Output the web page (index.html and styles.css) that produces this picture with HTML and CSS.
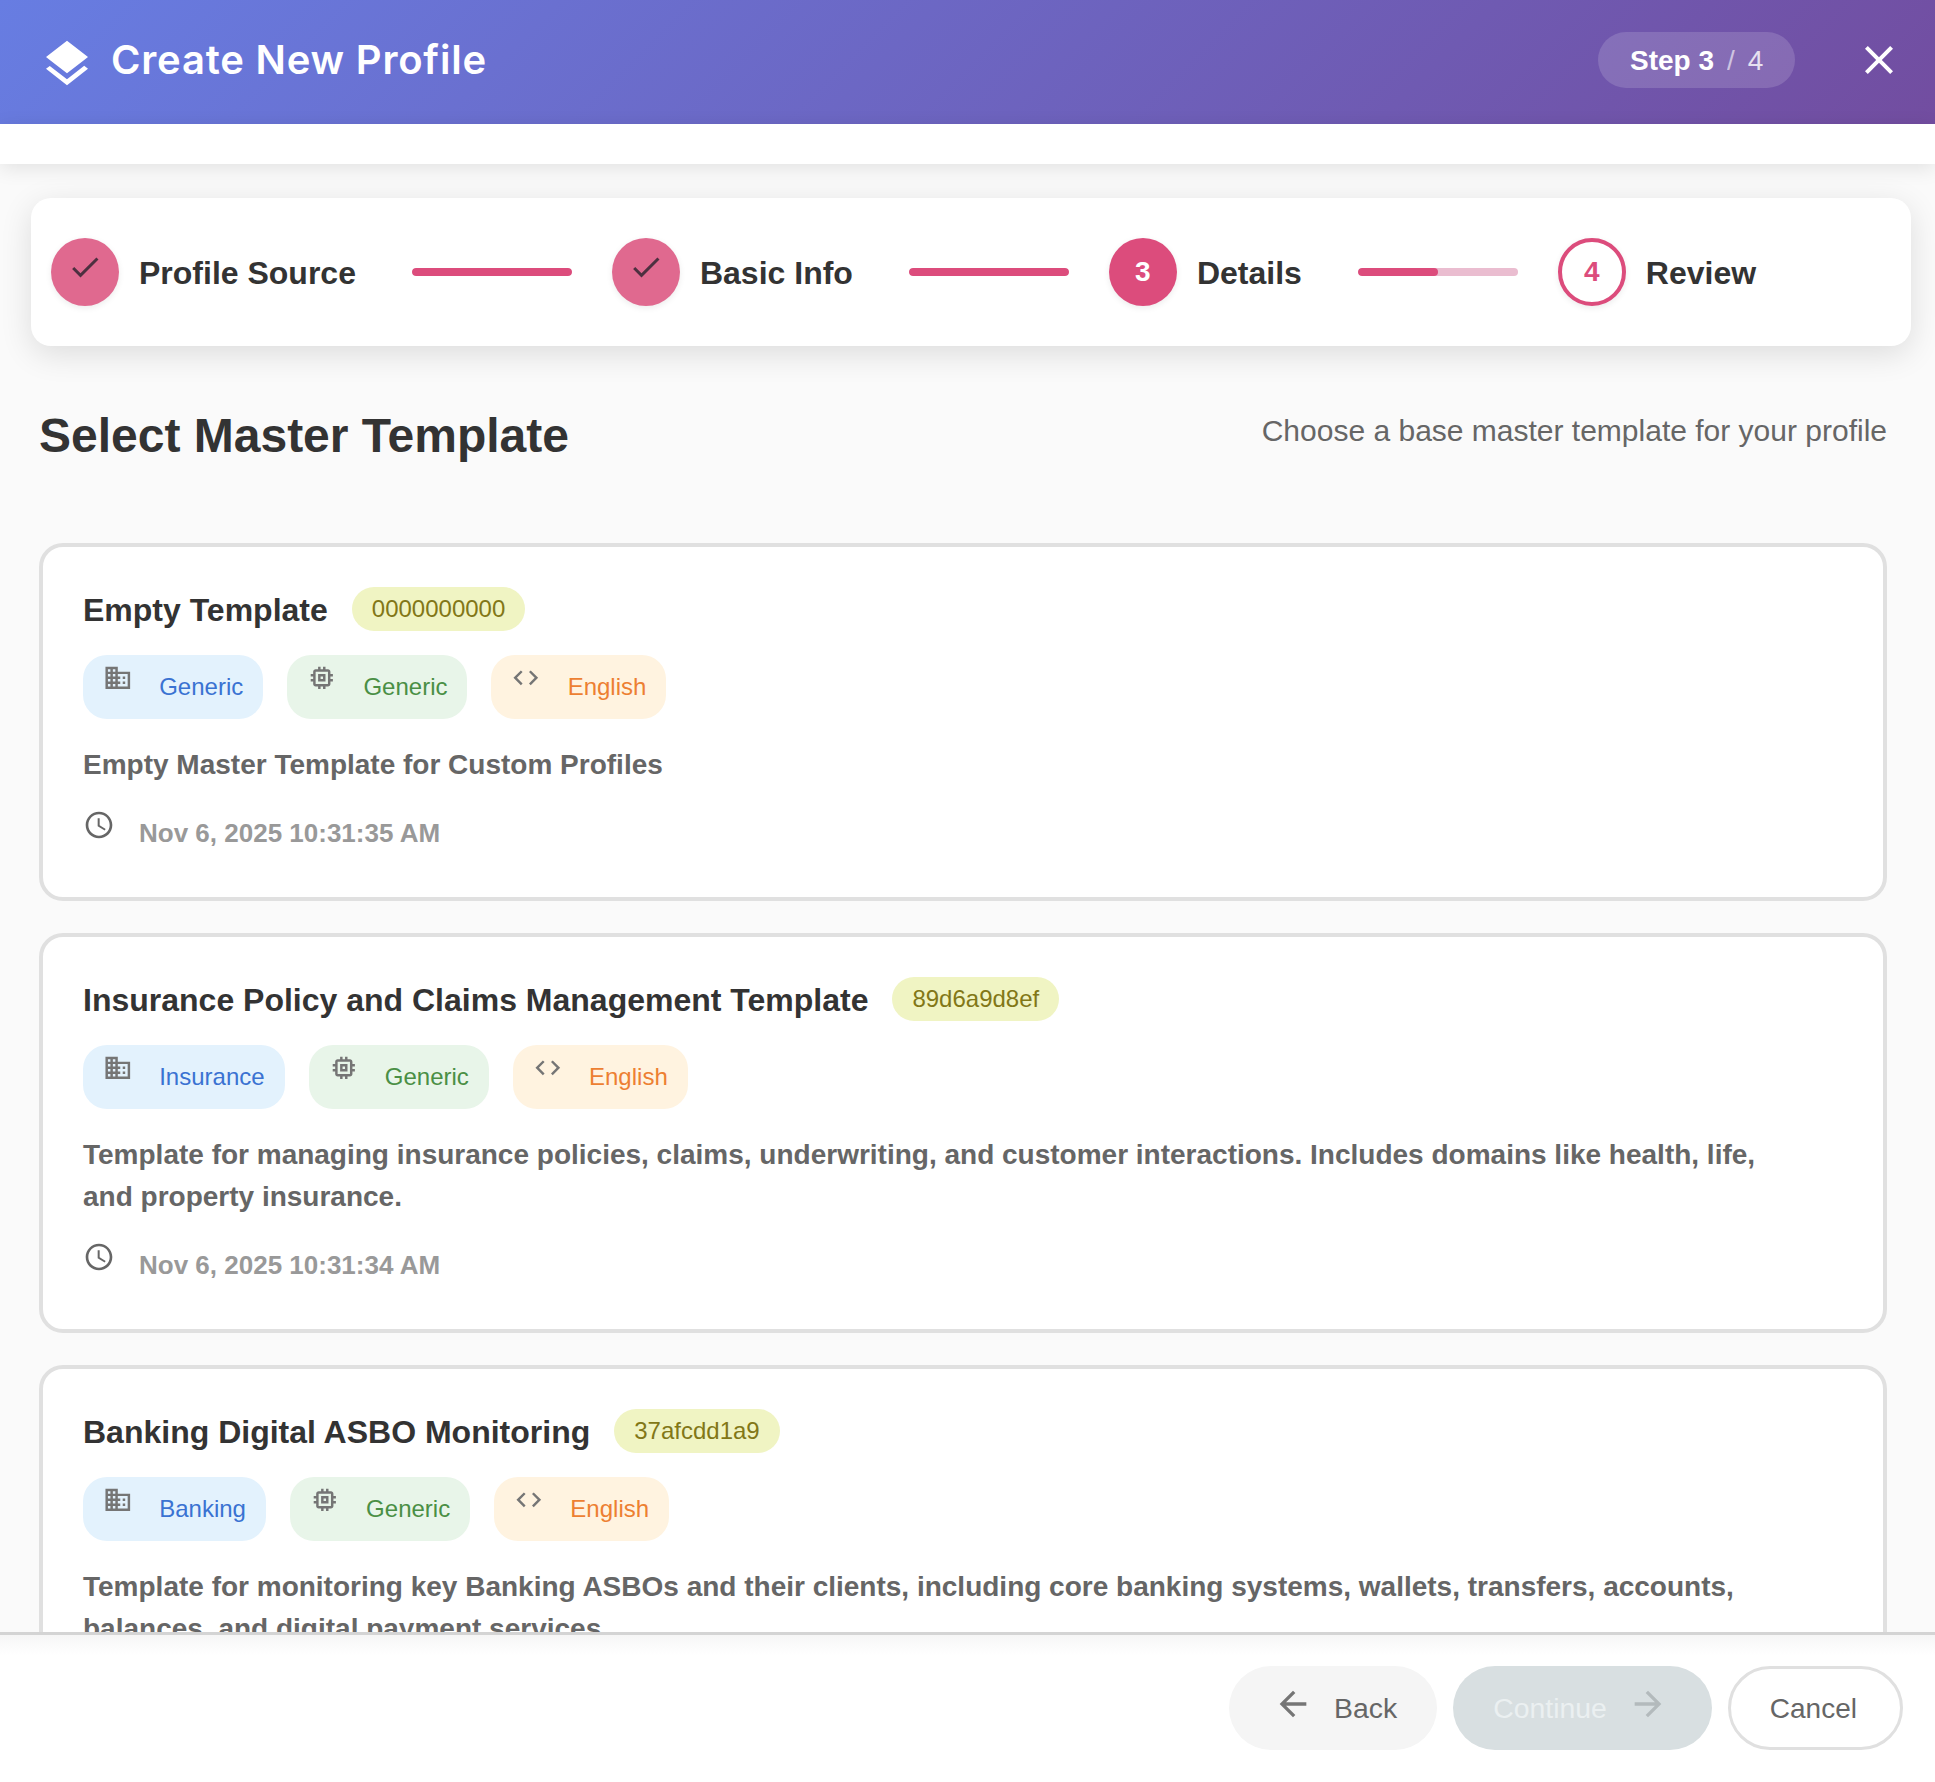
FILE: index.html
```html
<!DOCTYPE html>
<html lang="en">
<head>
<meta charset="utf-8">
<title>Create New Profile</title>
<link rel="stylesheet" href="styles.css">
</head>
<body>
<div class="app">
  <header class="header">
    <svg class="logo" viewBox="0 0 24 24"><path d="M11.99 18.54l-7.37-5.73L3 14.07l9 7 9-7-1.63-1.27-7.38 5.74zM12 16l7.36-5.73L21 9l-9-7-9 7 1.63 1.27L12 16z"/></svg>
    <h1 class="title">Create New Profile</h1>
    <div class="pill"><b>Step 3</b><span class="pill-sep">/</span><span class="pill-total">4</span></div>
    <svg class="close" viewBox="0 0 24 24"><path d="M19 6.41L17.59 5 12 10.59 6.41 5 5 6.41 10.59 12 5 17.59 6.41 19 12 13.41 17.59 19 19 17.59 13.41 12z"/></svg>
  </header>
  <div class="subbar"></div>
  <main class="content">
    <nav class="stepper">
      <div class="circle done"><svg viewBox="0 0 24 24"><path d="M9 16.17L4.83 12l-1.42 1.41L9 19 21 7l-1.41-1.41z"/></svg></div>
      <span class="step-label">Profile Source</span>
      <div class="connector"><i class="fill full"></i></div>
      <div class="circle done"><svg viewBox="0 0 24 24"><path d="M9 16.17L4.83 12l-1.42 1.41L9 19 21 7l-1.41-1.41z"/></svg></div>
      <span class="step-label">Basic Info</span>
      <div class="connector"><i class="fill full"></i></div>
      <div class="circle active">3</div>
      <span class="step-label">Details</span>
      <div class="connector"><i class="fill half"></i></div>
      <div class="circle next">4</div>
      <span class="step-label">Review</span>
    </nav>

    <section class="section">
      <div class="section-head">
        <h2 class="section-title">Select Master Template</h2>
        <p class="section-desc">Choose a base master template for your profile</p>
      </div>

      <article class="card">
        <div class="card-head"><h3 class="card-title">Empty Template</h3><span class="badge">0000000000</span></div>
        <div class="chips">
          <span class="chip blue"><svg viewBox="0 0 24 24"><path d="M12 7V3H2v18h20V7H12zM6 19H4v-2h2v2zm0-4H4v-2h2v2zm0-4H4V9h2v2zm0-4H4V5h2v2zm4 12H8v-2h2v2zm0-4H8v-2h2v2zm0-4H8V9h2v2zm0-4H8V5h2v2zm10 12h-8v-2h2v-2h-2v-2h2v-2h-2V9h8v10zm-2-8h-2v2h2v-2zm0 4h-2v2h2v-2z"/></svg>Generic</span>
          <span class="chip green"><svg viewBox="0 0 24 24"><path d="M15 9H9v6h6V9zm-2 4h-2v-2h2v2zm8-2V9h-2V7c0-1.1-.9-2-2-2h-2V3h-2v2h-2V3H9v2H7c-1.1 0-2 .9-2 2v2H3v2h2v2H3v2h2v2c0 1.1.9 2 2 2h2v2h2v-2h2v2h2v-2h2c1.1 0 2-.9 2-2v-2h2v-2h-2v-2h2zm-4 6H7V7h10v10z"/></svg>Generic</span>
          <span class="chip orange"><svg viewBox="0 0 24 24"><path d="M9.4 16.6L4.8 12l4.6-4.6L8 6l-6 6 6 6 1.4-1.4zm5.2 0l4.6-4.6-4.6-4.6L16 6l6 6-6 6-1.4-1.4z"/></svg>English</span>
        </div>
        <p class="card-desc">Empty Master Template for Custom Profiles</p>
        <div class="card-date"><svg viewBox="0 0 24 24"><path d="M11.99 2C6.47 2 2 6.48 2 12s4.47 10 9.99 10C17.52 22 22 17.52 22 12S17.52 2 11.99 2zM12 20c-4.42 0-8-3.58-8-8s3.58-8 8-8 8 3.58 8 8-3.58 8-8 8zm.5-13H11v6l5.25 3.15.75-1.23-4.5-2.67z"/></svg><span>Nov 6, 2025 10:31:35 AM</span></div>
      </article>

      <article class="card">
        <div class="card-head"><h3 class="card-title">Insurance Policy and Claims Management Template</h3><span class="badge">89d6a9d8ef</span></div>
        <div class="chips">
          <span class="chip blue"><svg viewBox="0 0 24 24"><path d="M12 7V3H2v18h20V7H12zM6 19H4v-2h2v2zm0-4H4v-2h2v2zm0-4H4V9h2v2zm0-4H4V5h2v2zm4 12H8v-2h2v2zm0-4H8v-2h2v2zm0-4H8V9h2v2zm0-4H8V5h2v2zm10 12h-8v-2h2v-2h-2v-2h2v-2h-2V9h8v10zm-2-8h-2v2h2v-2zm0 4h-2v2h2v-2z"/></svg>Insurance</span>
          <span class="chip green"><svg viewBox="0 0 24 24"><path d="M15 9H9v6h6V9zm-2 4h-2v-2h2v2zm8-2V9h-2V7c0-1.1-.9-2-2-2h-2V3h-2v2h-2V3H9v2H7c-1.1 0-2 .9-2 2v2H3v2h2v2H3v2h2v2c0 1.1.9 2 2 2h2v2h2v-2h2v2h2v-2h2c1.1 0 2-.9 2-2v-2h2v-2h-2v-2h2zm-4 6H7V7h10v10z"/></svg>Generic</span>
          <span class="chip orange"><svg viewBox="0 0 24 24"><path d="M9.4 16.6L4.8 12l4.6-4.6L8 6l-6 6 6 6 1.4-1.4zm5.2 0l4.6-4.6-4.6-4.6L16 6l6 6-6 6-1.4-1.4z"/></svg>English</span>
        </div>
        <p class="card-desc">Template for managing insurance policies, claims, underwriting, and customer interactions. Includes domains like health, life, and property insurance.</p>
        <div class="card-date"><svg viewBox="0 0 24 24"><path d="M11.99 2C6.47 2 2 6.48 2 12s4.47 10 9.99 10C17.52 22 22 17.52 22 12S17.52 2 11.99 2zM12 20c-4.42 0-8-3.58-8-8s3.58-8 8-8 8 3.58 8 8-3.58 8-8 8zm.5-13H11v6l5.25 3.15.75-1.23-4.5-2.67z"/></svg><span>Nov 6, 2025 10:31:34 AM</span></div>
      </article>

      <article class="card">
        <div class="card-head"><h3 class="card-title">Banking Digital ASBO Monitoring</h3><span class="badge">37afcdd1a9</span></div>
        <div class="chips">
          <span class="chip blue"><svg viewBox="0 0 24 24"><path d="M12 7V3H2v18h20V7H12zM6 19H4v-2h2v2zm0-4H4v-2h2v2zm0-4H4V9h2v2zm0-4H4V5h2v2zm4 12H8v-2h2v2zm0-4H8v-2h2v2zm0-4H8V9h2v2zm0-4H8V5h2v2zm10 12h-8v-2h2v-2h-2v-2h2v-2h-2V9h8v10zm-2-8h-2v2h2v-2zm0 4h-2v2h2v-2z"/></svg>Banking</span>
          <span class="chip green"><svg viewBox="0 0 24 24"><path d="M15 9H9v6h6V9zm-2 4h-2v-2h2v2zm8-2V9h-2V7c0-1.1-.9-2-2-2h-2V3h-2v2h-2V3H9v2H7c-1.1 0-2 .9-2 2v2H3v2h2v2H3v2h2v2c0 1.1.9 2 2 2h2v2h2v-2h2v2h2v-2h2c1.1 0 2-.9 2-2v-2h2v-2h-2v-2h2zm-4 6H7V7h10v10z"/></svg>Generic</span>
          <span class="chip orange"><svg viewBox="0 0 24 24"><path d="M9.4 16.6L4.8 12l4.6-4.6L8 6l-6 6 6 6 1.4-1.4zm5.2 0l4.6-4.6-4.6-4.6L16 6l6 6-6 6-1.4-1.4z"/></svg>English</span>
        </div>
        <p class="card-desc">Template for monitoring key Banking ASBOs and their clients, including core banking systems, wallets, transfers, accounts, balances, and digital payment services.</p>
      </article>
    </section>
  </main>
  <footer class="footer">
    <button class="btn back"><svg viewBox="0 0 24 24"><path d="M20 11H7.83l5.59-5.59L12 4l-8 8 8 8 1.41-1.41L7.83 13H20v-2z"/></svg><span>Back</span></button>
    <button class="btn continue"><span>Continue</span><svg viewBox="0 0 24 24"><path d="M12 4l-1.41 1.41L16.17 11H4v2h12.17l-5.58 5.59L12 20l8-8z"/></svg></button>
    <button class="btn cancel"><span>Cancel</span></button>
  </footer>
</div>
</body>
</html>
```

FILE: styles.css
```css
* { box-sizing: border-box; }
html, body { margin: 0; height: 100%; }
body { font-family: "Liberation Sans", Arial, sans-serif; color: #333; background: #fff; }
.app { height: 1782px; display: flex; flex-direction: column; overflow: hidden; }

.header { flex: none; height: 124px; padding: 0 32px 0 39px; display: flex; align-items: center; color: #fff; background: linear-gradient(135deg, #677de2 0%, #724da0 100%); }
.logo { width: 56px; height: 56px; fill: #fff; margin-top: 4px; }
.title { margin: 0 0 4px 16px; flex: 1; font-family: Inter, sans-serif; font-size: 40px; font-weight: 600; line-height: 1.2; letter-spacing: .8px; }
.pill { width: 197px; height: 56px; margin-bottom: 4px; padding: 2px 0 0 32px; display: flex; align-items: center; font-size: 28px; border-radius: 28px; background: rgba(255, 255, 255, .15); }
.pill-sep { margin: 0 13px; font-weight: 300; opacity: .6; }
.pill-total { opacity: .8; }
.close { width: 48px; height: 48px; margin: 0 0 4px 60px; fill: #fff; }

.subbar { flex: none; height: 40px; background: #fff; box-shadow: 0 4px 20px rgba(0, 0, 0, .1); position: relative; z-index: 1; }

.content { flex: 1; min-height: 0; overflow: hidden; background: #fafafa; padding-top: 34px; }

.stepper { height: 148px; margin: 0 24px 0 31px; padding-left: 20px; display: flex; align-items: center; background: #fff; border-radius: 20px; box-shadow: 0 8px 32px rgba(0, 0, 0, .12); }
.circle { flex: none; width: 68px; height: 68px; border-radius: 50%; display: flex; align-items: center; justify-content: center; font-size: 28px; font-weight: 700; box-shadow: 0 2px 6px rgba(0, 0, 0, .08); }
.circle svg { width: 36px; height: 36px; margin-top: -11px; fill: #4d3040; }
.circle.done { background: #e0698f; }
.circle.active { background: #dc4c7c; color: #fff; }
.circle.next { background: #fff; color: #dc4c7c; border: 4px solid #dc4c7c; }
.step-label { margin: 2px 0 0 20px; font-size: 32px; font-weight: 700; line-height: 1.2; color: #333; }
.connector { flex: none; width: 160px; height: 8px; margin: 0 40px 0 56px; border-radius: 4px; background: #eabdd0; overflow: hidden; }
.fill { display: block; height: 100%; border-radius: 4px; background: #dc4c7c; }
.fill.full { width: 100%; }
.fill.half { width: 50%; }

.section { padding: 62px 48px 0 39px; }
.section-head { display: flex; justify-content: space-between; align-items: flex-start; margin-bottom: 80px; }
.section-title { margin: 0; font-size: 48px; font-weight: 700; line-height: 55px; color: #333; }
.section-desc { margin: 5px 0 0; font-size: 30px; line-height: 36px; color: #666; }

.card { padding: 40px; margin-bottom: 32px; background: #fff; border: 4px solid #e0e0e0; border-radius: 24px; }
.card-head { height: 44px; display: flex; align-items: center; gap: 24px; }
.card-title { margin: 1px 0 0; font-size: 32px; font-weight: 700; line-height: 44px; color: #333; }
.badge { height: 44px; padding: 0 20px; border-radius: 22px; font-size: 24px; line-height: 44px; color: #827717; background: #f0f4c3; }
.chips { display: flex; gap: 24px; margin-top: 24px; }
.chip { height: 64px; padding: 0 20px; display: flex; align-items: center; font-size: 24px; border-radius: 24px; }
.chip svg { width: 29.6px; height: 29.6px; margin: -19px 26.6px 0 0; fill: #757575; }
.chip.blue { background: #e3f2fd; color: #3a72d2; }
.chip.green { background: #e8f5e9; color: #4a8f45; }
.chip.orange { background: #fff3e0; color: #ed7f32; }
.card-desc { max-width: 1700px; margin: 25px 0 0; font-size: 28px; font-weight: 700; line-height: 42px; color: #666; }
.card-date { height: 48px; margin-top: 23px; display: flex; align-items: center; font-size: 26px; font-weight: 700; color: #999; }
.card-date svg { width: 32px; height: 32px; margin: -16px 24px 0 0; fill: #666; }

.footer { flex: none; height: 150px; padding: 31px 32px 0 0; display: flex; justify-content: flex-end; align-items: flex-start; gap: 16px; border-top: 3px solid #d4d4d4; background: linear-gradient(#f6f6f6, #fff 20px); position: relative; z-index: 1; }
.btn { height: 84px; padding: 0 40px 0 44px; display: flex; align-items: center; gap: 21px; font: 28.4px "Liberation Sans", Arial, sans-serif; border: 0; border-radius: 42px; }
.btn span { margin-top: 1px; }
.btn svg { width: 40px; height: 40px; margin-top: -8px; }
.btn.back { background: #f5f5f5; color: #666; }
.btn.back svg { fill: #757575; }
.btn.continue { padding: 0 44px 0 40px; background: #d8dfe1; color: #ebf0f1; }
.btn.continue svg { fill: #b3babc; }
.btn.cancel { padding: 0 43px 0 39px; font-size: 28px; background: #fff; color: #666; border: 3px solid #e0e0e0; }
```
